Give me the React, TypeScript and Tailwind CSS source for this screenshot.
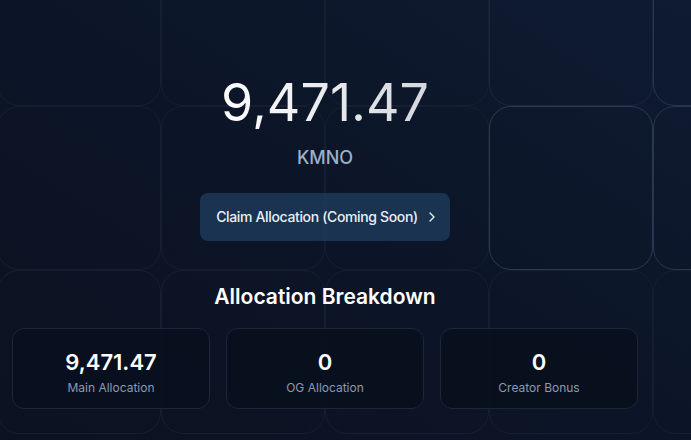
import { ChevronRight } from "lucide-react";

type Breakdown = { label: string; value: string };

const breakdown: Breakdown[] = [
  { label: "Main Allocation", value: "9,471.47" },
  { label: "OG Allocation", value: "0" },
  { label: "Creator Bonus", value: "0" },
];

// 5 x 3 decorative tiles behind the page, a few of them lit up
const lit: Record<number, string> = {
  3: "border-[#1d273b]",
  4: "border-[#27354f]",
  8: "border-[#2a3954]",
  9: "border-[#27354f]",
};

function TileGrid() {
  return (
    <div
      aria-hidden
      className="pointer-events-none absolute left-[-3px] top-[-58px] grid grid-cols-[repeat(5,164px)] auto-rows-[164px]"
    >
      {Array.from({ length: 15 }).map((_, i) => (
        <div key={i} className={`rounded-[22px] border ${lit[i] ?? "border-[#161f31]"}`} />
      ))}
    </div>
  );
}

export default function App() {
  return (
    <div className="relative h-[440px] overflow-hidden bg-gradient-to-tr from-[#0b1221] via-[#0c1527] to-[#0e1b31] font-['Inter',sans-serif]">
      <TileGrid />
      <div className="relative flex w-[650px] flex-col items-center px-3 pt-[77px]">
        <h1 className="bg-gradient-to-r from-white to-[#d4d7dd] bg-clip-text text-[52px] leading-none font-normal text-transparent">
          9,471.47
        </h1>
        <p className="mt-[15px] text-lg leading-7 font-medium text-[#9bb0c9]">KMNO</p>
        <button className="mt-[21px] flex h-12 items-center gap-1.5 rounded-lg bg-[#1e3b5b]/80 pr-[10px] pl-4 text-sm font-medium tracking-[-0.025em] text-[#e9eff6]">
          Claim Allocation (Coming Soon)
          <ChevronRight className="h-4 w-4" strokeWidth={2} />
        </button>
        <h2 className="mt-[42px] text-[21px] leading-7 font-semibold text-white">Allocation Breakdown</h2>
        <div className="mt-[17px] grid w-full grid-cols-3 gap-4">
          {breakdown.map((item) => (
            <div
              key={item.label}
              className="flex h-[81px] flex-col items-center justify-center rounded-xl border border-[#1c2639] bg-[#080f1e]/90 pt-1.5"
            >
              <span className="text-[22px] leading-7 font-semibold text-white">{item.value}</span>
              <span className="mt-1 text-xs leading-4 text-[#8a9ab0]">{item.label}</span>
            </div>
          ))}
        </div>
      </div>
    </div>
  );
}
